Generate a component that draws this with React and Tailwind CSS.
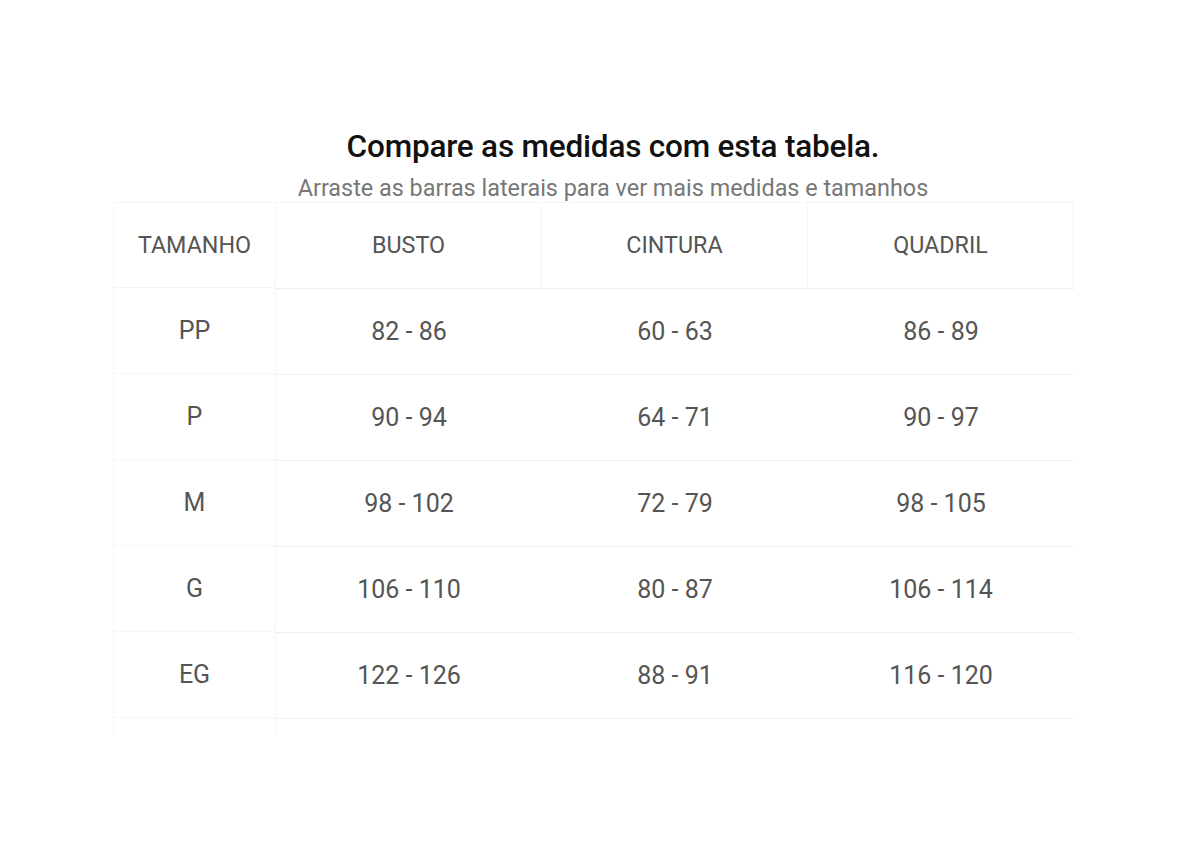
import React from "react";

const rows = [
  ["PP", "82 - 86", "60 - 63", "86 - 89"],
  ["P", "90 - 94", "64 - 71", "90 - 97"],
  ["M", "98 - 102", "72 - 79", "98 - 105"],
  ["G", "106 - 110", "80 - 87", "106 - 114"],
  ["EG", "122 - 126", "88 - 91", "116 - 120"],
];

export default function App() {
  return (
    <div
      className="w-[1200px] h-[846px] bg-white pt-[128px] pl-[113px]"
      style={{ fontFamily: "Roboto, 'Noto Sans', sans-serif" }}
    >
      <div className="w-[1000px] flex flex-col">
        <h1 className="text-center text-[31.5px] leading-[38px] font-medium text-[#111111] tracking-[-0.2px]">
          Compare as medidas com esta tabela.
        </h1>
        <p className="text-center text-[23.4px] leading-[28px] text-[#777777] mt-[8px]">
          Arraste as barras laterais para ver mais medidas e tamanhos
        </p>
        <div className="w-[961px] flex">
          <div className="w-[163px] flex flex-col border-r border-[#f4f4f4] pb-[17px] border-l border-l-[#f7f7f7]">
            <div className="h-[86px] flex items-center justify-center text-[23.3px] text-[#555555] border-b border-t border-[#f5f5f5]">
              TAMANHO
            </div>
            {rows.map((r) => (
              <div
                key={r[0]}
                className="h-[86px] flex items-center justify-center text-[25px] text-[#555555] border-b border-[#f6f6f6]"
              >
                {r[0]}
              </div>
            ))}
          </div>
          <div className="flex-1 flex flex-col">
            <div className="h-[86px] grid grid-cols-3">
              {["BUSTO", "CINTURA", "QUADRIL"].map((h) => (
                <div
                  key={h}
                  className="flex items-center justify-center text-[23.3px] text-[#555555] border-r border-t border-[#f5f5f5]"
                >
                  {h}
                </div>
              ))}
            </div>
            {rows.map((r) => (
              <div
                key={r[0]}
                className="h-[86px] grid grid-cols-3 border-t border-[#efefef]"
              >
                {r.slice(1).map((v, i) => (
                  <div
                    key={i}
                    className="flex items-center justify-center text-[25px] text-[#555555]"
                  >
                    {v}
                  </div>
                ))}
              </div>
            ))}
            <div className="border-t border-[#efefef]" />
          </div>
        </div>
      </div>
    </div>
  );
}
